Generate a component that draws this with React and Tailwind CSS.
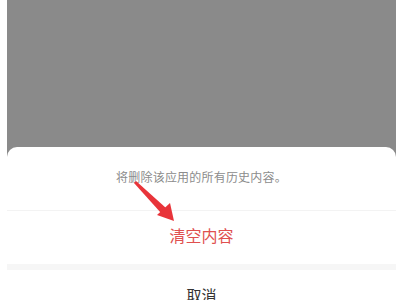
export default function App() {
  return (
    <div
      className="relative w-[400px] h-[300px] overflow-hidden bg-white"
      style={{ fontFamily: '"Noto Sans CJK SC", "Noto Sans", sans-serif' }}
    >
      <div className="ml-[7px] w-[389px] bg-[#8a8a8a] flex flex-col">
        <div className="h-[147px]" />
        <div className="bg-white rounded-t-[10px] flex flex-col">
          <div className="h-[63px] pb-[4px] flex items-center justify-center text-[12px] tracking-[0.2px] text-[#8c8c8c]">
            将删除该应用的所有历史内容。
          </div>
          <div className="h-px bg-[#f3f3f3]" />
          <div className="h-[53px] pb-[5px] flex items-center justify-center text-[16px] text-[#e0504f]">
            清空内容
          </div>
          <div className="h-[6px] bg-[#f6f6f6]" />
          <div className="h-[50px] flex items-center justify-center text-[15px] text-[#333]">
            取消
          </div>
        </div>
      </div>

      {/* annotation arrow */}
      <svg className="absolute left-0 top-0" width="400" height="300" viewBox="0 0 400 300">
        <polygon points="134,183 136,181 166,208 161,213" fill="#e8343a" />
        <polygon points="174,221 157,215 170,203" fill="#e8343a" />
      </svg>
    </div>
  )
}
